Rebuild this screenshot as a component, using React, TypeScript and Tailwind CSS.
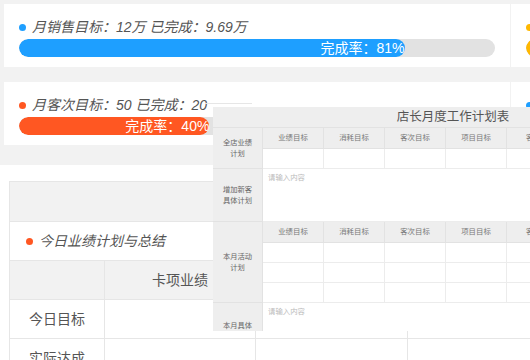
import React from "react";

type CardProps = {
  dot: string;
  bar: string;
  label: string;
  pct: string;
  text: string;
};

const heads = ["业绩目标", "消耗目标", "客次目标", "项目目标", "客单价", "新客数", "备注"];

const ProgressCard = ({ dot, bar, label, pct, text }: CardProps) => (
  <div className="w-[506px] h-[63px] shrink-0 bg-white px-[15px] pt-[13px]">
    <div className="flex items-center h-[20px] gap-[6px]">
      <span className={`w-[7px] h-[7px] rounded-full shrink-0 ${dot}`} />
      <span className="italic text-[14px] text-[#555] whitespace-nowrap">{label}</span>
    </div>
    <div className="mt-[2px] h-[18px] rounded-full bg-[#e2e2e2] overflow-hidden">
      <div
        className={`h-full rounded-full text-right text-white text-[14px] leading-[18px] whitespace-nowrap ${bar}`}
        style={{ width: pct }}
      >
        {text}
      </div>
    </div>
  </div>
);

const HeadRow = () => (
  <div className="grid grid-cols-[repeat(7,61px)] h-[21px] bg-[#eee] border-b border-[#e2e2e2]">
    {heads.map((h) => (
      <div key={h} className="flex items-center justify-center border-r border-[#e2e2e2] text-[7.4px] text-[#777]">
        {h}
      </div>
    ))}
  </div>
);

const DataRow = ({ h }: { h: string }) => (
  <div className={`grid grid-cols-[repeat(7,61px)] border-b border-[#ececec] ${h}`}>
    {heads.map((c) => (
      <div key={c} className="border-r border-[#ececec]" />
    ))}
  </div>
);

const Label = ({ text }: { text: string }) => (
  <div className="w-[50px] shrink-0 bg-[#eee] border-r border-b border-[#e2e2e2] flex items-center justify-center">
    <div className="w-[30px] text-center text-[7.3px] leading-[11px] text-[#666]">{text}</div>
  </div>
);

const Placeholder = () => (
  <div className="flex-1 border-b border-[#ececec] pl-[5px] pt-[3px] text-[7.4px] leading-[11px] text-[#bbb]">请输入内容</div>
);

const App = () => {
  return (
    <div className="relative w-[530px] h-[360px] overflow-hidden bg-[#f2f2f2] font-['Liberation_Sans','Noto_Sans_CJK_SC',sans-serif] flex flex-col">
      {/* 进度卡片 */}
      <div className="flex flex-col gap-[15px] pt-[4px] pl-[4px] pb-[20px]">
        <div className="flex gap-[1px]">
          <ProgressCard dot="bg-[#1e9fff]" bar="bg-[#1e9fff]" label="月销售目标：12万 已完成：9.69万" pct="81%" text="完成率：81%" />
          <ProgressCard dot="bg-[#ffb800]" bar="bg-[#ffb800]" label="月消耗目标：8万 已完成：4.2万" pct="52%" text="完成率：52%" />
        </div>
        <div className="flex gap-[1px]">
          <ProgressCard dot="bg-[#ff5722]" bar="bg-[#ff5722]" label="月客次目标：50 已完成：20" pct="40%" text="完成率：40%" />
          <ProgressCard dot="bg-[#1e9fff]" bar="bg-[#1e9fff]" label="月项目目标：30 已完成：12" pct="40%" text="完成率：40%" />
        </div>
      </div>

      {/* 今日业绩 */}
      <div className="flex-1 bg-white pt-[16px] pl-[9px]">
        <div className="w-[760px] border-l border-t border-[#e6e6e6] text-[14px] text-[#555]">
          <div className="h-[40px] bg-[#f2f2f2] border-b border-[#e6e6e6]" />
          <div className="h-[39px] flex items-center gap-[6px] pl-[16px] border-b border-[#e6e6e6]">
            <span className="w-[7px] h-[7px] rounded-full bg-[#ff5722]" />
            <span className="italic">今日业绩计划与总结</span>
          </div>
          <div className="h-[39px] flex bg-[#f2f2f2] border-b border-[#e6e6e6]">
            <div className="w-[95px] border-r border-[#e6e6e6]" />
            <div className="w-[151px] flex items-center justify-center border-r border-[#e6e6e6]">卡项业绩</div>
            <div className="w-[304px] flex items-center justify-center border-r border-[#e6e6e6]">项目业绩</div>
          </div>
          {["今日目标", "实际达成"].map((r) => (
            <div key={r} className="h-[39px] flex border-b border-[#e6e6e6]">
              <div className="w-[95px] flex items-center justify-center border-r border-[#e6e6e6]">{r}</div>
              <div className="w-[151px] border-r border-[#e6e6e6]" />
              <div className="w-[152px] border-r border-[#e6e6e6]" />
              <div className="w-[152px] border-r border-[#e6e6e6]" />
            </div>
          ))}
        </div>
      </div>

      <div className="absolute left-[205px] top-[103px] w-[47px] h-[1px] bg-[#e6e6e6]" />

      {/* 店长月度工作计划表 */}
      <div className="absolute left-[213px] top-[107px] w-[480px] h-[224px] overflow-hidden bg-white">
        <div className="h-[21px] bg-[#eee] border-b border-[#e2e2e2] flex items-center justify-center text-[12.5px] text-[#555]">
          店长月度工作计划表
        </div>
        <div className="flex h-[41px]">
          <Label text="全店业绩计划" />
          <div className="flex flex-col">
            <HeadRow />
            <DataRow h="h-[20px]" />
          </div>
        </div>
        <div className="flex h-[53px]">
          <Label text="增加新客具体计划" />
          <Placeholder />
        </div>
        <div className="flex h-[81px]">
          <Label text="本月活动计划" />
          <div className="flex flex-col">
            <HeadRow />
            <DataRow h="h-[20px]" />
            <DataRow h="h-[20px]" />
            <DataRow h="h-[20px]" />
          </div>
        </div>
        <div className="flex h-[56px]">
          <Label text="本月具体工作计划" />
          <Placeholder />
        </div>
      </div>
    </div>
  );
};

export default App;
